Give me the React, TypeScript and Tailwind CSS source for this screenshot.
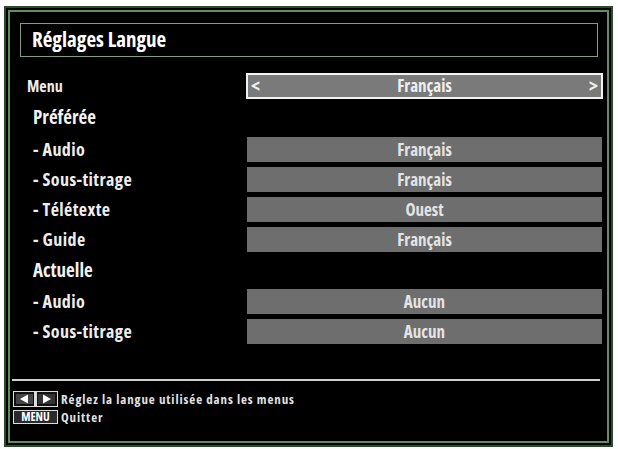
import React from "react";

// Écran OSD "Réglages Langue" — cadre vert double, lignes gris TV.

function ValueBox({ value }: { value: string }) {
  return (
    <div className="flex h-full w-[355px] items-center justify-center bg-[#6e6e6e] text-[17px] font-bold text-[#e4e4e4]">
      {value}
    </div>
  );
}

function SubRow({ label, value, mt }: { label: string; value: string; mt: string }) {
  return (
    <div className={`flex h-[25px] items-center ${mt}`}>
      <div className="w-[222px] pl-[8px] text-[18px] font-bold tracking-[0.4px] text-[#ededed]">- {label}</div>
      <ValueBox value={value} />
    </div>
  );
}

function ArrowKeys() {
  return (
    <svg width="45" height="16" viewBox="0 0 45 16" aria-hidden>
      <rect x="0.5" y="0.5" width="44" height="15" fill="#111" stroke="#ddd" />
      <rect x="3" y="3" width="17" height="10" fill="#444" />
      <polygon points="7,8 15,3.5 15,12.5" fill="#fff" />
      <rect x="21" y="1" width="3" height="14" fill="#ddd" />
      <rect x="25" y="3" width="17" height="10" fill="#333" />
      <polygon points="38,8 30,3.5 30,12.5" fill="#fff" />
    </svg>
  );
}

export default function App() {
  return (
    <div className="h-[449px] w-[618px] overflow-hidden bg-white font-['Open_Sans',sans-serif] font-stretch-condensed">
      <div className="ml-[4px] mt-[6px] h-[441px] w-[609px] border-2 border-[#2c4a2c] bg-black p-[2px]">
        <div className="flex h-full w-full flex-col border-2 border-[#5f8f5f] bg-black">
          {/* Titre */}
          <div className="ml-[10px] mt-[11px] flex h-[34px] w-[578px] items-center border border-[#7f9f7f] pl-[11px] text-[21px] font-bold text-white">
            Réglages Langue
          </div>

          {/* Menu */}
          <div className="mt-[16px] flex h-[26px] items-center">
            <div className="w-[236px] pl-[17px] text-[16px] font-bold text-[#ededed]">Menu</div>
            <div className="flex h-full w-[357px] items-center justify-between border-2 border-[#f2f2f2] bg-[#7a7a7a] px-[3px] text-[17px] font-bold text-[#efefef]">
              <span className="text-[19px] leading-none">&lt;</span>
              <span>Français</span>
              <span className="text-[19px] leading-none">&gt;</span>
            </div>
          </div>

          <div className="mt-[6px] flex h-[25px] items-center pl-[23px] text-[19px] font-bold text-[#f2f2f2]">
            Préférée
          </div>
          <div className="pl-[15px]">
            <SubRow label="Audio" value="Français" mt="mt-[7px]" />
            <SubRow label="Sous-titrage" value="Français" mt="mt-[5px]" />
            <SubRow label="Télétexte" value="Ouest" mt="mt-[5px]" />
            <SubRow label="Guide" value="Français" mt="mt-[5px]" />
          </div>

          <div className="mt-[6px] flex h-[25px] items-center pl-[23px] text-[19px] font-bold text-[#f2f2f2]">
            Actuelle
          </div>
          <div className="pl-[15px]">
            <SubRow label="Audio" value="Aucun" mt="mt-[6px]" />
            <SubRow label="Sous-titrage" value="Aucun" mt="mt-[5px]" />
          </div>

          {/* Séparateur */}
          <div className="ml-[2px] mt-[35px] h-[2px] w-[588px] bg-[#cfcfcf]" />

          {/* Aide */}
          <div className="ml-[3px] mt-[10px] flex h-[16px] items-center gap-[3px]">
            <ArrowKeys />
            <span className="text-[13px] font-bold leading-[13px] tracking-[0.9px] text-[#e2e2e2]">
              Réglez la langue utilisée dans les menus
            </span>
          </div>
          <div className="ml-[3px] mt-[3px] flex h-[14px] items-center gap-[3px]">
            <div className="flex h-[14px] w-[45px] items-center justify-center border border-[#ddd] bg-[#2a2a2a] text-[12px] font-bold leading-none text-white">
              MENU
            </div>
            <span className="text-[13px] font-bold leading-[13px] tracking-[0.9px] text-[#e2e2e2]">Quitter</span>
          </div>
        </div>
      </div>
    </div>
  );
}
